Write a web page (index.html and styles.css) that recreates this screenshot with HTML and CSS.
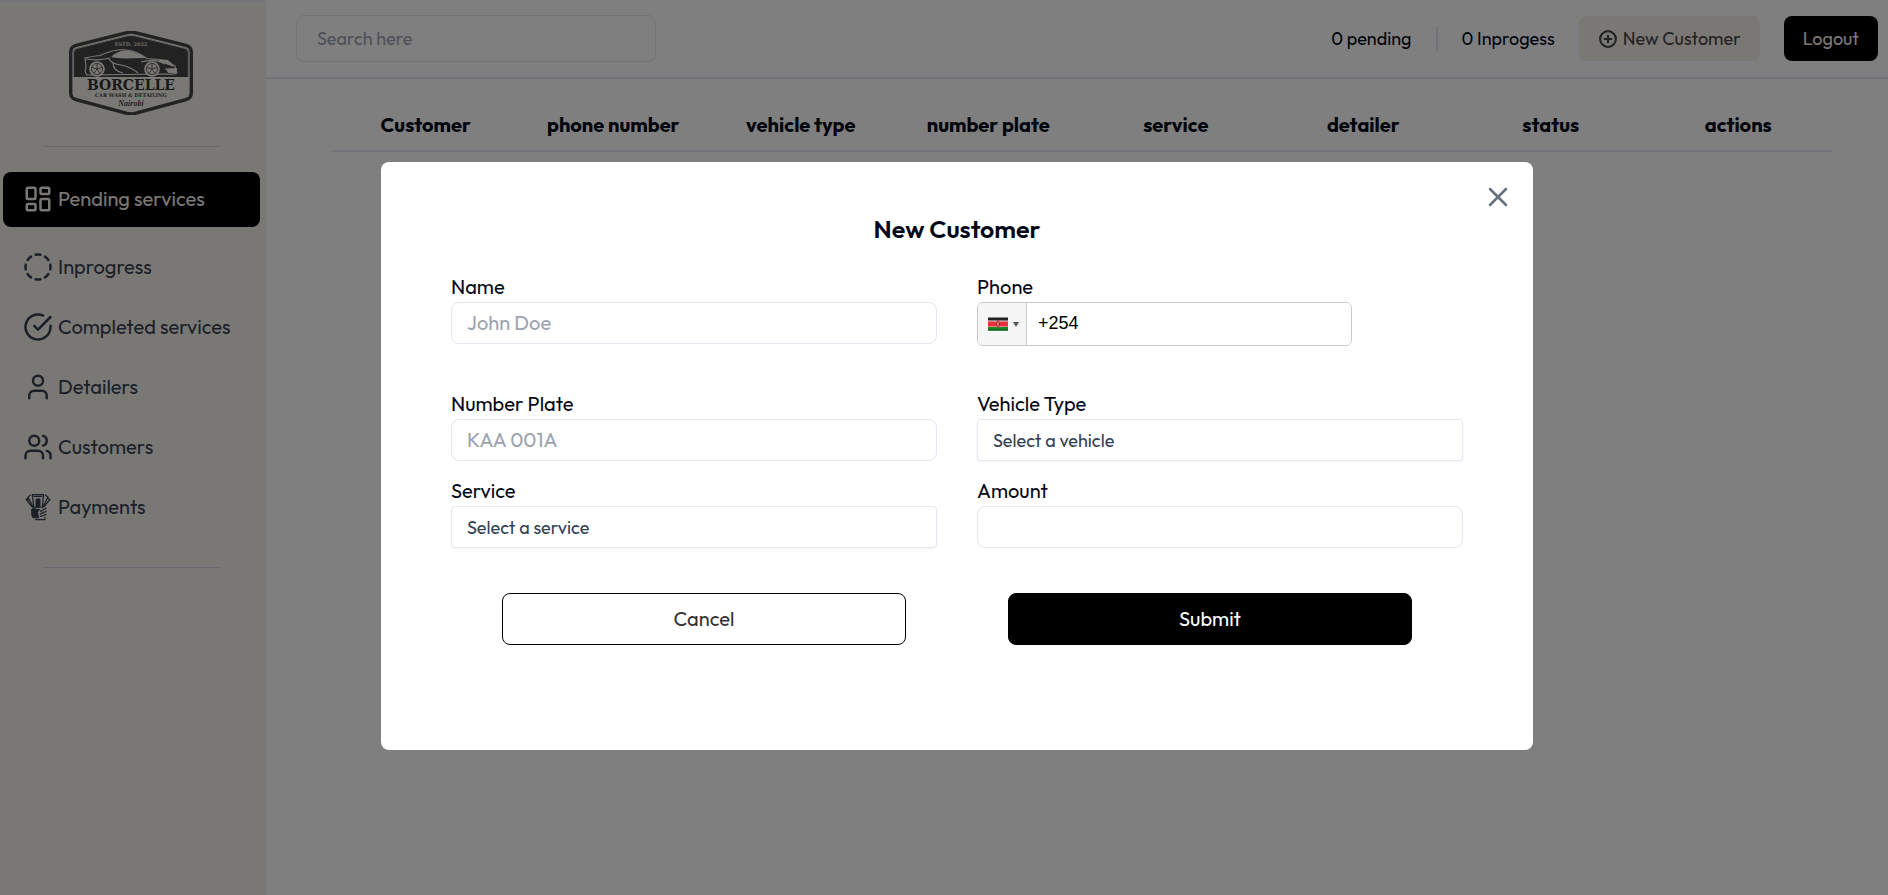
FILE: index.html
```html
<!DOCTYPE html>
<html lang="en">
<head>
<meta charset="utf-8">
<meta name="viewport" content="width=device-width, initial-scale=1">
<title>Borcelle Car Wash</title>
<link rel="stylesheet" href="styles.css">
</head>
<body>
<div class="app">
  <aside class="sidebar">
    <div class="brand">
      <svg class="brand-logo" viewBox="0 0 124 84" role="img" aria-label="Borcelle Car Wash and Detailing">
        <path d="M58 1.6Q62 .6 66 1.6L117 14.4Q122.300 16 122.300 21V62Q122.300 67 117 68.600L66 82.400Q62 83.400 58 82.400L7 68.600Q1.700 67 1.700 62V21Q1.700 16 7 14.400Z" fill="none" stroke="#444" stroke-width="3.400"/>
        <path d="M4 46V22Q4 18 8 17L58 4.600Q62 3.600 66 4.600L116 17Q120 18 120 22V46Z" fill="#444"/>
        <path d="M4.600 66V21.500Q4.600 18.200 8 17.400L58 4.900Q62 4 66 4.900L116 17.400Q119.400 18.200 119.400 21.500V66" fill="none" stroke="#f5f1eb" stroke-width=".8"/>
        <text class="logo-estd" x="62" y="15">ESTD. 2022</text>
        <path d="M16 27Q24 25 31 24.500Q43 18.500 55 18.700Q67 19 78 27.500Q98 28 106 35L108 42Q104 44 97 43L18 44Q15 41 17 37Z" fill="#444" stroke="#f5f1eb" stroke-width="1.100"/>
        <path d="M42 26Q48 20 56 19.500Q68 20 77 27L56 27.500Q47 27 42 26Z" fill="#f5f1eb"/>
        <path d="M52 20L57 27M17 28Q30 30 41 27M40 28Q43 33 52 34Q62 36 69 42M44 32Q44 40 54 42M72 31Q86 27 96 33M90 29L100 33M96 38L107 38" fill="none" stroke="#f5f1eb" stroke-width="1.200"/>
        <path d="M89 28L99 29Q103 32 105 36L97 33ZM97 38L108 37 107 42 99 42Z" fill="#f5f1eb"/>
        <g fill="#f5f1eb"><circle cx="28" cy="38" r="7.800"/><circle cx="83" cy="38" r="7.800"/></g>
        <g fill="none" stroke="#444" stroke-width=".8"><circle cx="28" cy="38" r="5.500"/><path d="M28 38V32.500M28 38L33.200 36.300M28 38L31.200 42.500M28 38L24.800 42.500M28 38L22.800 36.300"/><circle cx="83" cy="38" r="5.500"/><path d="M83 38V32.500M83 38L88.200 36.300M83 38L86.200 42.500M83 38L79.800 42.500M83 38L77.800 36.300"/></g>
        <text class="logo-name" x="62" y="59">BORCELLE</text>
        <text class="logo-line" x="62" y="66">CAR WASH &amp; DETAILING</text>
        <text class="logo-city" x="62" y="75">Nairobi</text>
      </svg>
    </div>
    <hr class="rule">
    <nav class="nav" aria-label="Main">
      <a class="nav-item active" href="#"><svg class="icon" viewBox="0 0 24 24"><rect x="3" y="3" width="7" height="9" rx="1"/><rect x="14" y="3" width="7" height="5" rx="1"/><rect x="14" y="12" width="7" height="9" rx="1"/><rect x="3" y="16" width="7" height="5" rx="1"/></svg>Pending services</a>
      <a class="nav-item" href="#"><svg class="icon" viewBox="0 0 24 24"><path d="M10.100 2.180a9.930 9.930 0 0 1 3.800 0M17.600 3.710a9.950 9.950 0 0 1 2.690 2.700M21.820 10.100a9.930 9.930 0 0 1 0 3.800M20.290 17.600a9.950 9.950 0 0 1-2.700 2.690M13.900 21.820a9.940 9.940 0 0 1-3.800 0M6.400 20.290a9.950 9.950 0 0 1-2.690-2.700M2.180 13.900a9.930 9.930 0 0 1 0-3.800M3.710 6.400a9.950 9.950 0 0 1 2.700-2.690"/></svg>Inprogress</a>
      <a class="nav-item" href="#"><svg class="icon" viewBox="0 0 24 24"><path d="M22 11.080V12a10 10 0 1 1-5.930-9.140"/><path d="M22 4 12 14.010l-3-3"/></svg>Completed services</a>
      <a class="nav-item" href="#"><svg class="icon" viewBox="0 0 24 24"><circle cx="12" cy="7" r="4"/><path d="M19 21v-2a4 4 0 0 0-4-4H9a4 4 0 0 0-4 4v2"/></svg>Detailers</a>
      <a class="nav-item" href="#"><svg class="icon" viewBox="0 0 24 24"><path d="M16 21v-2a4 4 0 0 0-4-4H6a4 4 0 0 0-4 4v2"/><circle cx="9" cy="7" r="4"/><path d="M22 21v-2a4 4 0 0 0-3-3.870M16 3.130a4 4 0 0 1 0 7.750"/></svg>Customers</a>
      <a class="nav-item" href="#"><svg class="icon cash" viewBox="0 0 24 24"><path d="M7.500 2H16.500L15.500 12H8.500ZM6 2.500 4 4 8 12M4 5 2.500 6 7.500 12M18 2.500 20 4 16 12M20 5 21.500 6 16.500 12M9 3.500H15"/><path class="solid" d="M10 6Q12 4 14 6V11L12.500 12.500H10ZM6.500 14Q8 12 11 13.500L14 13.500 12 16 13 21H8Q6.500 20 6.500 17ZM2.500 5.500 4.500 5 6 8Z"/><path d="M14 15.500 18.500 13M14 17.500 18.500 15.500M14 19.500 18.500 18M10 22H17.500V20.500"/></svg>Payments</a>
    </nav>
    <hr class="rule">
  </aside>

  <div class="page">
    <header class="topbar">
      <input class="search" type="search" placeholder="Search here" aria-label="Search">
      <div class="topbar-actions">
        <div class="counts"><span>0 pending</span><span class="divider"></span><span>0 Inprogess</span></div>
        <button class="btn btn-soft" type="button"><svg class="icon-small" viewBox="0 0 24 24"><circle cx="12" cy="12" r="9.500"/><path d="M8 12h8M12 8v8"/></svg>New Customer</button>
        <button class="btn btn-dark" type="button">Logout</button>
      </div>
    </header>
    <main class="content">
      <table class="services">
        <thead><tr><th>Customer</th><th>phone number</th><th>vehicle type</th><th>number plate</th><th>service</th><th>detailer</th><th>status</th><th>actions</th></tr></thead>
      </table>
    </main>
  </div>
</div>

<div class="overlay">
  <section class="modal" role="dialog" aria-modal="true" aria-labelledby="modal-title">
    <button class="close" type="button" aria-label="Close"><svg viewBox="0 0 24 24"><path d="M4 4 20 20M20 4 4 20"/></svg></button>
    <h2 class="modal-title" id="modal-title">New Customer</h2>
    <form>
      <div class="fields">
        <div class="field field-tall"><label for="name">Name</label><input class="control" id="name" type="text" placeholder="John Doe"></div>
        <div class="field field-tall"><label for="phone">Phone</label>
          <div class="phone">
            <button class="country" type="button" aria-label="Country: Kenya">
              <svg class="flag" viewBox="0 0 20 13"><path fill="#222" d="M0 0h20v4H0z"/><path fill="#ddd" d="M0 3h20v7H0z"/><path fill="#e8303a" d="M0 4h20v5H0z"/><path fill="#168a22" d="M0 9.500h20V13H0z"/><path fill="#0c4d14" d="M0 12h20v1H0z"/><ellipse cx="10" cy="6.500" rx="2" ry="4" fill="#a51c22"/><path d="M10 3v7M8 3l4 7M12 3l-4 7" stroke="#e9b9b9" stroke-width=".5"/></svg>
              <span class="caret"></span>
            </button>
            <input class="phone-input" id="phone" type="tel" value="+254">
          </div>
        </div>
        <div class="field"><label for="plate">Number Plate</label><input class="control" id="plate" type="text" placeholder="KAA 001A"></div>
        <div class="field"><label for="vehicle">Vehicle Type</label><select class="control select" id="vehicle"><option>Select a vehicle</option></select></div>
        <div class="field"><label for="service">Service</label><select class="control select" id="service"><option>Select a service</option></select></div>
        <div class="field"><label for="amount">Amount</label><input class="control" id="amount" type="text"></div>
      </div>
      <div class="form-actions">
        <button class="form-btn" type="button">Cancel</button>
        <button class="form-btn submit" type="submit">Submit</button>
      </div>
    </form>
  </section>
</div>
</body>
</html>
```
FILE: styles.css
```css
*, *::before, *::after { box-sizing: border-box; }

body {
  margin: 0;
  color: #020817;
  background: #fff;
  font-family: Outfit, Lato, sans-serif;
  font-size: 20px;
  line-height: 28px;
}

button, input, select { font: inherit; color: inherit; }
button { cursor: pointer; }

.app { display: flex; min-height: 100vh; }

.sidebar {
  flex: none;
  width: 266px;
  border-top: 1px solid #e2e8f0;
  border-right: 1px solid #e2e8f0;
  background: #f5f1eb;
}
.brand { display: flex; justify-content: center; padding: 30px 4px 31px 0; }
.brand-logo { display: block; width: 124px; height: 84px; }
.brand-logo text { fill: #444; text-anchor: middle; font-family: "DejaVu Serif", serif; font-weight: 700; }
.brand-logo .logo-estd { fill: #d8d4cb; font-size: 5px; }
.brand-logo .logo-name { font-size: 14px; fill: #333; }
.brand-logo .logo-line { font-size: 5px; }
.brand-logo .logo-city { font-family: "Liberation Serif", serif; font-style: italic; font-size: 8px; }

.rule { width: 177px; height: 1px; margin: 0 0 0 43px; border: 0; background: #d5d7e0; }

.nav { display: flex; flex-direction: column; gap: 4px; padding: 25px 5px 32px 3px; }
.nav-item {
  display: flex;
  align-items: center;
  gap: 5px;
  height: 56px;
  padding: 0 20px;
  border-radius: 8px;
  color: #374151;
  text-decoration: none;
}
.nav-item.active { height: 55px; margin-bottom: 8px; padding-bottom: 1px; background: #000; color: #f5f1eb; }
.icon { flex: none; width: 30px; height: 30px; }
.icon, .icon-small, .close svg { fill: none; stroke: currentColor; stroke-width: 2; stroke-linecap: round; stroke-linejoin: round; }
.icon.cash { stroke-width: 1; }
.cash .solid { fill: currentColor; stroke: none; }

.page { flex: 1; min-width: 0; }
.topbar {
  display: flex;
  align-items: center;
  justify-content: space-between;
  height: 79px;
  padding: 0 10px 0 30px;
  border-bottom: 2px solid #e2e8f0;
  font-size: 18px;
}
.search {
  width: 360px;
  height: 47px;
  padding: 0 20px;
  border: 1px solid #e2e8f0;
  border-radius: 8px;
  background: transparent;
  appearance: none;
}
.search::placeholder { color: #9ca3af; opacity: 1; }
.topbar-actions { display: flex; align-items: center; gap: 24px; }
.counts { display: flex; align-items: center; gap: 24px; }
.divider { width: 2px; height: 25px; background: #e2e8f0; }
.btn { display: flex; align-items: center; gap: 5px; height: 45px; padding: 0 19px; border: 0; border-radius: 8px; }
.btn-soft { background: #f5f1eb; color: #444; }
.btn-dark { background: #000; color: #f5f1eb; }
.icon-small { width: 20px; height: 20px; stroke-width: 2.5; }

.content { padding: 20px 56px 0 66px; }
.services { width: 100%; table-layout: fixed; border-collapse: collapse; }
.services th { height: 52px; padding: 0; border-bottom: 2px solid #e2e8f0; font-weight: 700; text-align: center; }

.overlay {
  position: fixed;
  inset: 0;
  display: flex;
  justify-content: center;
  align-items: flex-start;
  padding: 162px 0 0 26px;
  overflow: auto;
  background: rgba(0, 0, 0, .5);
}
.modal {
  position: relative;
  width: 100%;
  max-width: 1152px;
  padding: 53px 70px 105px;
  border-radius: 8px;
  background: #fff;
}
.close {
  position: absolute;
  top: 23px;
  right: 23px;
  width: 24px;
  height: 24px;
  padding: 0;
  border: 0;
  background: none;
  color: #64707f;
}
.close svg { display: block; width: 24px; height: 24px; stroke-width: 2.5; }
.modal-title { margin: 0 0 30px; font-size: 25px; font-weight: 600; line-height: 28px; text-align: center; }

.fields { display: grid; grid-template-columns: 1fr 1fr; gap: 16px 40px; }
.field { display: flex; flex-direction: column; gap: 1px; }
.field-tall { min-height: 101px; }
.control {
  width: 100%;
  height: 42px;
  padding: 0 15px 1px;
  border: 1px solid #e2e8f0;
  border-radius: 8px;
  background: #fff;
}
.control::placeholder { color: #9ca3af; opacity: 1; }
.select { padding: 2px 15px 0; border-radius: 4px; color: #334155; font-size: 18px; appearance: none; box-shadow: 0 1px 2px rgba(0, 0, 0, .05); }

.phone { display: flex; width: 375px; max-width: 100%; height: 44px; border: 1px solid #cacaca; border-radius: 6px; overflow: hidden; }
.country { display: flex; align-items: center; gap: 5px; flex: none; width: 49px; padding: 0 0 0 10px; border: 0; border-right: 1px solid #cacaca; background: #f5f5f5; }
.flag { width: 20px; height: 14px; }
.caret { border: 3px solid transparent; border-top: 5px solid #555; border-bottom: 0; }
.phone-input { flex: 1; min-width: 0; padding: 0 11px 3px; border: 0; background: #fff; color: #000; font-family: "Liberation Sans", sans-serif; font-size: 18px; }

.form-actions { display: grid; grid-template-columns: 1fr 1fr; justify-items: center; margin-top: 45px; }
.form-btn { width: 80%; height: 52px; border: 1px solid #000; border-radius: 8px; background: #fff; color: #333; }
.form-btn.submit { background: #000; color: #fff; }
```
